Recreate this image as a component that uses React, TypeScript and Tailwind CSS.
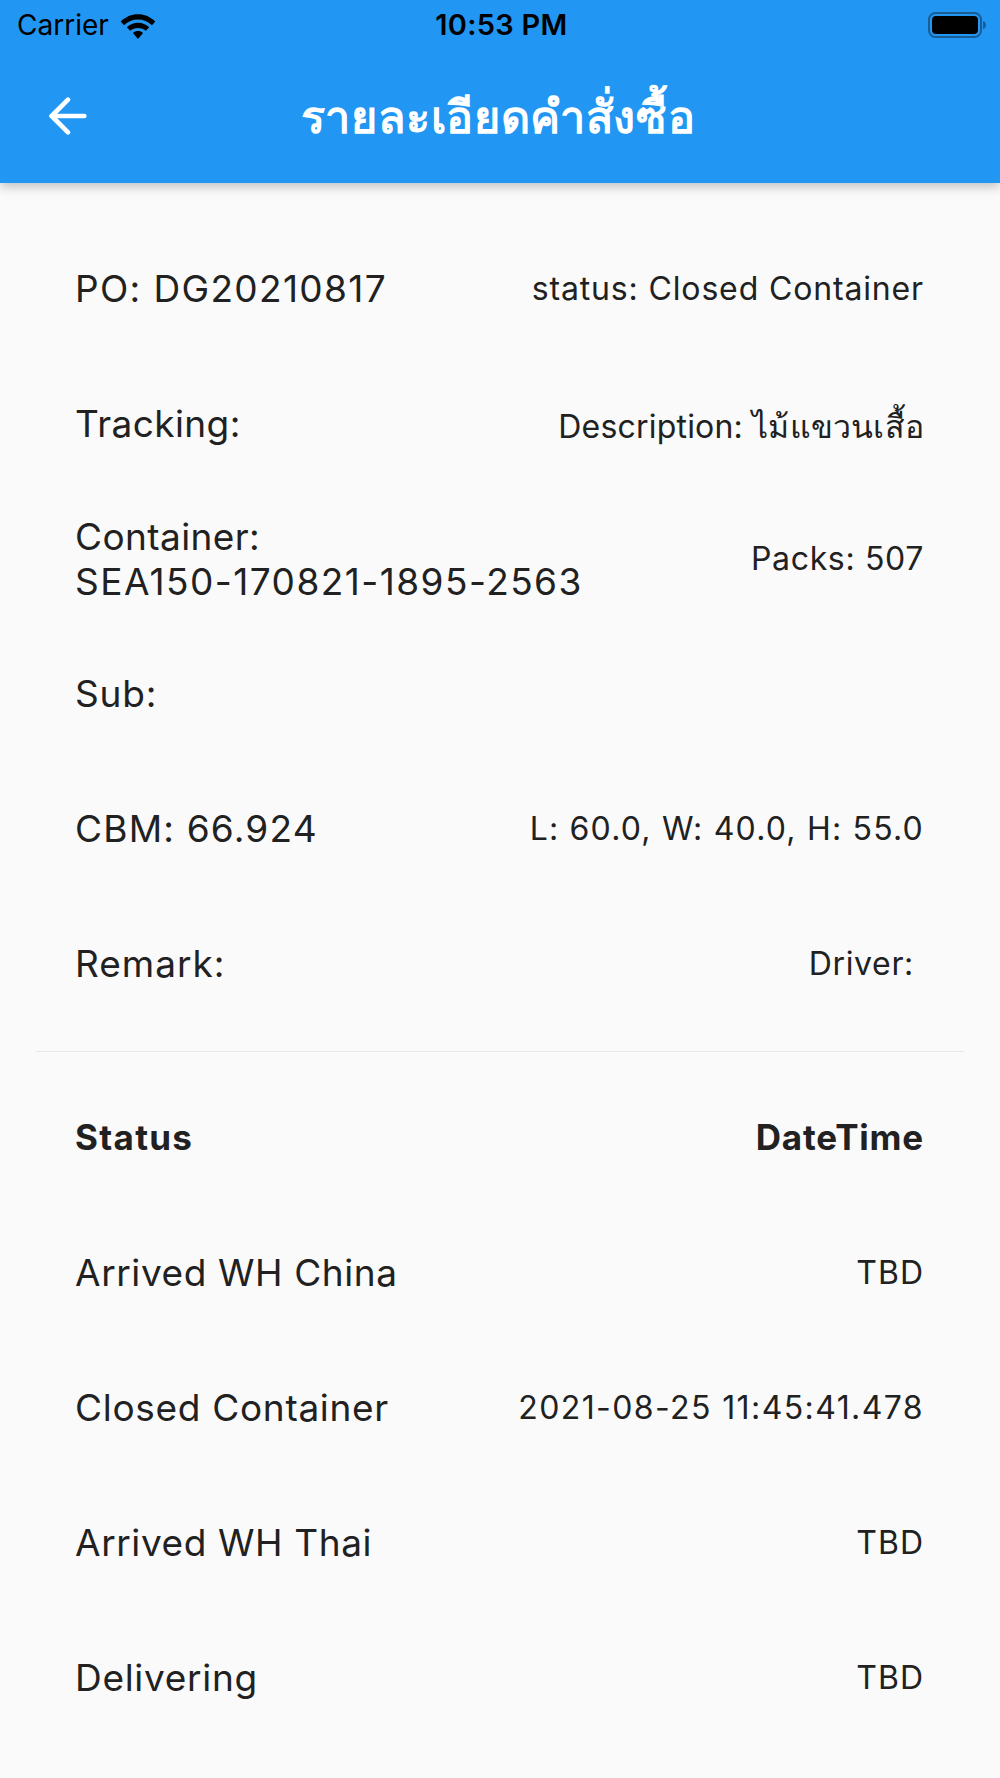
import type { ReactNode } from "react";
import { ArrowLeft } from "lucide-react";

const topRows = [
  { left: "PO: DG20210817", lt: "tracking-[1.35px]", right: "status: Closed Container", rt: "tracking-[0.85px] pr-[76px]" },
  { left: "Tracking:", lt: "tracking-[0.4px]", right: "Description: ไม้แขวนเสื้อ", rt: "tracking-[0.2px] pr-[76px] pt-[6px]" },
  {
    left: (
      <>
        <span className="block tracking-[0.4px]">Container:</span>
        <span className="block">SEA150-170821-1895-2563</span>
      </>
    ),
    lt: "tracking-[1.45px]",
    right: "Packs: 507",
    rt: "tracking-[0.65px] pr-[76px]",
  },
  { left: "Sub:", lt: "tracking-[0.8px]", right: "", rt: "" },
  { left: "CBM: 66.924", lt: "tracking-[1.2px]", right: "L: 60.0, W: 40.0, H: 55.0", rt: "tracking-[1.2px] pr-[76px]" },
  { left: "Remark:", lt: "tracking-[1px]", right: "Driver:", rt: "tracking-[0.65px] pr-[86px]" },
];

const statusRows = [
  { left: "Arrived WH China", lt: "tracking-[0.6px]", right: "TBD", rt: "tracking-[1px] pr-[76px]" },
  { left: "Closed Container", lt: "tracking-[0.7px]", right: "2021-08-25 11:45:41.478", rt: "tracking-[1.4px] pr-[76px]" },
  { left: "Arrived WH Thai", lt: "tracking-[0.6px]", right: "TBD", rt: "tracking-[1px] pr-[76px]" },
  { left: "Delivering", lt: "tracking-[0.7px]", right: "TBD", rt: "tracking-[1px] pr-[76px]" },
];

type RowProps = { left: ReactNode; lt: string; right: string; rt: string };

function Row({ left, lt, right, rt }: RowProps) {
  return (
    <div className="flex h-[135px] items-center justify-between pl-[75px]">
      <div className={`text-[37px] leading-[45px] ${lt}`}>{left}</div>
      <p className={`text-[32px] leading-[40px] ${rt}`}>{right}</p>
    </div>
  );
}

export default function App() {
  return (
    <div className="h-[1778px] overflow-hidden bg-[#fafafa] font-['Inter','Noto_Sans',sans-serif] text-[#212121]">
      <header className="relative h-[183px] bg-[#2196f3] shadow-[0_4px_10px_rgba(0,0,0,0.22)]">
        <div className="flex h-[50px] items-center justify-between pl-[17px] pr-[13px] text-black">
          <div className="flex items-center gap-[11px]">
            <span className="text-[28px]">Carrier</span>
            <svg width="36" height="29" viewBox="0 0 32 26" fill="currentColor">
              <path d="M16 3C10 3 5 5.300 0.500 9.500L3.500 12.800C7 9.500 11 7.700 16 7.700S25 9.500 28.500 12.800L31.500 9.500C27 5.300 22 3 16 3Z" />
              <path d="M16 10.500C12 10.500 9 12 6 14.500L9 17.800C11 16 13 15.200 16 15.200S21 16 23 17.800L26 14.500C23 12 20 10.500 16 10.500Z" />
              <path d="M16 18C14.200 18 12.800 18.600 11.500 19.700L16 25L20.500 19.700C19.200 18.600 17.800 18 16 18Z" />
            </svg>
          </div>
          <span className="ml-[-80px] text-[29px] font-semibold tracking-[0.3px]">10:53 PM</span>
          <svg width="60" height="30" viewBox="0 0 60 30">
            <rect x="2" y="3" width="52" height="24" rx="6.500" fill="none" stroke="#1a5c94" strokeWidth="2" />
            <rect x="5" y="6" width="46" height="18" rx="4" fill="#000" />
            <path d="M56 11C58 11.500 59 13 59 15S58 18.500 56 19Z" fill="#1a5c94" />
          </svg>
        </div>
        <div className="relative flex h-[133px] items-center justify-center text-white">
          <ArrowLeft className="absolute left-[40px] top-[38px] size-[56px]" strokeWidth={2} />
          <h1 className="ml-[-4px] text-[45px] font-semibold leading-[56px] tracking-[0.6px]">รายละเอียดคำสั่งซื้อ</h1>
        </div>
      </header>

      <main className="pt-[38px]">
        {topRows.map((row, i) => (
          <Row key={i} {...row} />
        ))}
        <div className="mx-[36px] mt-[20px] h-[1px] bg-[#e8e8e8]" />
        <div className="mt-[18px] flex h-[135px] items-center justify-between pl-[75px] pr-[76px] text-[35px] font-bold">
          <span className="tracking-[1.3px]">Status</span>
          <span className="tracking-[0.8px]">DateTime</span>
        </div>
        {statusRows.map((row, i) => (
          <Row key={i} {...row} />
        ))}
      </main>
    </div>
  );
}
